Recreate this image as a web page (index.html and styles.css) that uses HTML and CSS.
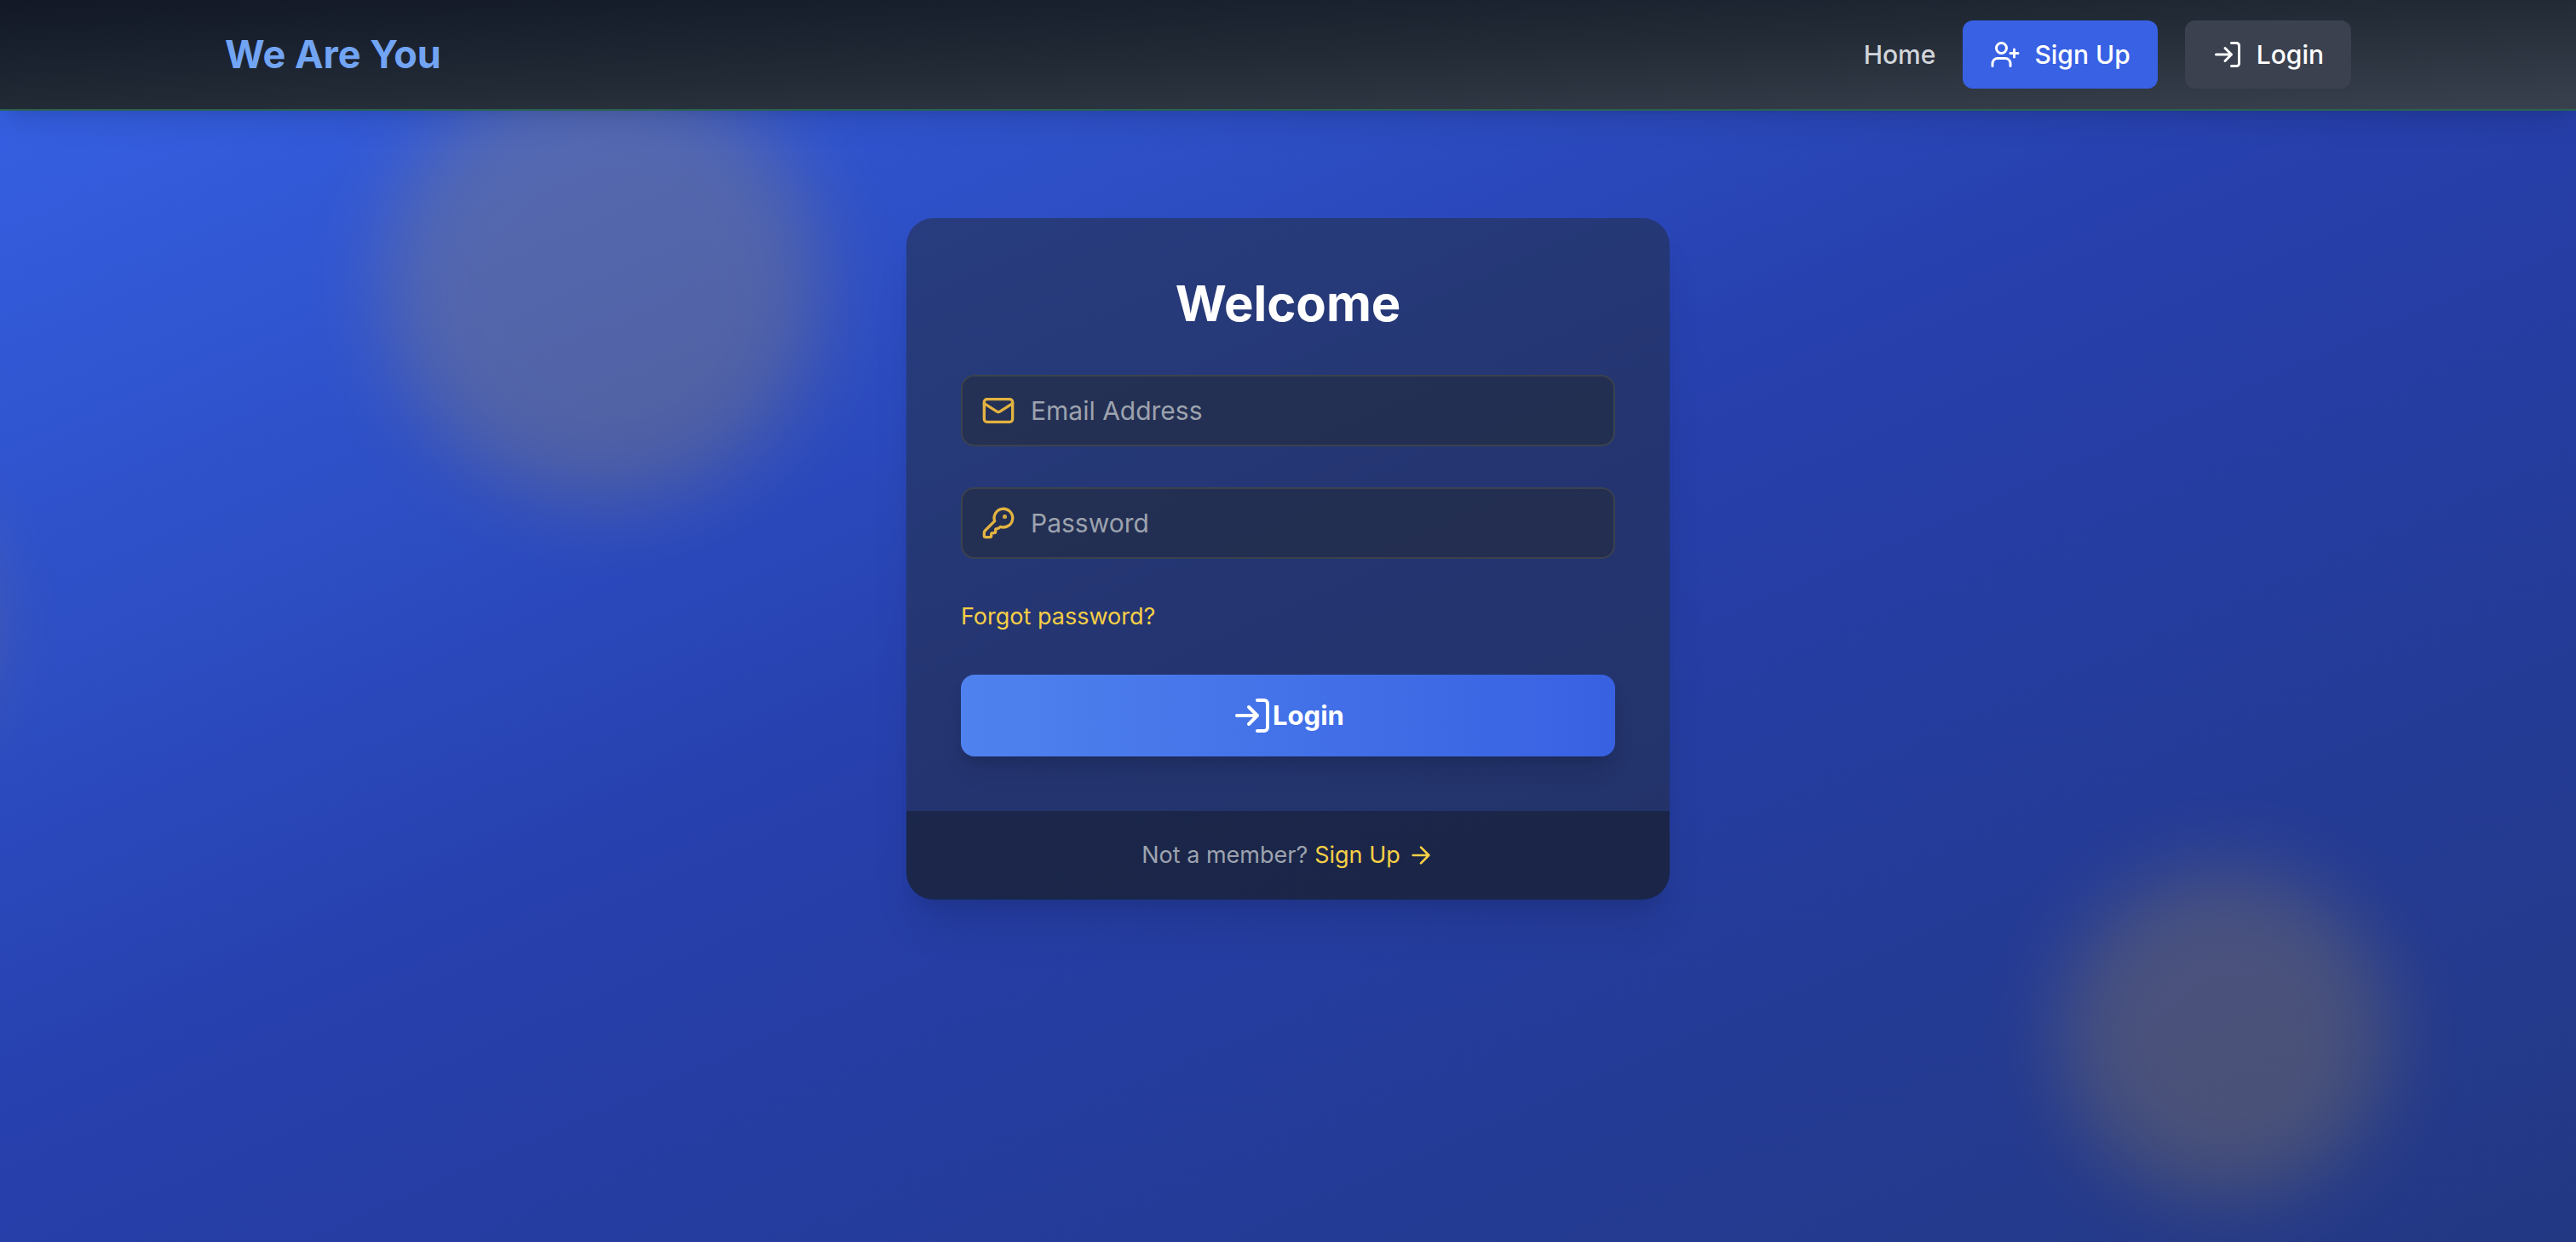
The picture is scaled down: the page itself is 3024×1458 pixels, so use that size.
FILE: index.html
```html
<!DOCTYPE html>
<html lang="en">
<head>
<meta charset="utf-8">
<meta name="viewport" content="width=device-width, initial-scale=1">
<title>We Are You</title>
<link rel="stylesheet" href="styles.css">
</head>
<body>
<header class="header">
  <div class="header-inner">
    <a class="logo" href="#">We Are You</a>
    <nav class="nav">
      <a class="nav-link" href="#">Home</a>
      <a class="nav-button nav-button-primary" href="#">
        <svg class="icon icon-sm" viewBox="0 0 24 24" aria-hidden="true"><path d="M16 21v-2a4 4 0 0 0-4-4H6a4 4 0 0 0-4 4v2"/><circle cx="9" cy="7" r="4"/><path d="M19 8v6M22 11h-6"/></svg>
        Sign Up
      </a>
      <a class="nav-button" href="#">
        <svg class="icon icon-sm" viewBox="0 0 24 24" aria-hidden="true"><path d="M15 3h4a2 2 0 0 1 2 2v14a2 2 0 0 1-2 2h-4"/><path d="m10 17 5-5-5-5M15 12H3"/></svg>
        Login
      </a>
    </nav>
  </div>
</header>
<main class="main">
  <div class="blob blob-top"></div>
  <div class="blob blob-left"></div>
  <div class="blob blob-bottom"></div>
  <section class="card">
    <div class="card-body">
      <h1 class="title">Welcome</h1>
      <form class="form">
        <label class="field">
          <svg class="icon icon-md" viewBox="0 0 24 24" aria-hidden="true"><rect x="2" y="4" width="20" height="16" rx="2"/><path d="m22 7-8.970 5.700a1.940 1.940 0 0 1-2.060 0L2 7"/></svg>
          <input class="input" type="email" placeholder="Email Address" aria-label="Email Address">
        </label>
        <label class="field">
          <svg class="icon icon-md" viewBox="0 0 24 24" aria-hidden="true"><path d="M2.586 17.414A2 2 0 0 0 2 18.828V21a1 1 0 0 0 1 1h3a1 1 0 0 0 1-1v-1a1 1 0 0 1 1-1h1a1 1 0 0 0 1-1v-1a1 1 0 0 1 1-1h.172a2 2 0 0 0 1.414-.586l.814-.814a6.5 6.5 0 1 0-4-4z"/><circle cx="16.5" cy="7.5" r=".5" fill="currentColor"/></svg>
          <input class="input" type="password" placeholder="Password" aria-label="Password">
        </label>
        <a class="link forgot" href="#">Forgot password?</a>
        <button class="submit" type="submit">
          <svg class="icon icon-lg" viewBox="0 0 24 24" aria-hidden="true"><path d="M15 3h4a2 2 0 0 1 2 2v14a2 2 0 0 1-2 2h-4"/><path d="m10 17 5-5-5-5M15 12H3"/></svg>
          Login
        </button>
      </form>
    </div>
    <div class="card-footer">
      <span>Not a member?</span>
      <a class="link signup" href="#">Sign Up
        <svg class="icon icon-xs" viewBox="0 0 24 24" aria-hidden="true"><path d="M5 12h14M12 5l7 7-7 7"/></svg>
      </a>
    </div>
  </section>
</main>
</body>
</html>
```
FILE: styles.css
```css
*,
*::before,
*::after {
  box-sizing: border-box;
}

body {
  margin: 0;
  min-height: 100vh;
  display: flex;
  flex-direction: column;
  font-family: Inter, "Liberation Sans", sans-serif;
  font-size: 30px;
  line-height: 48px;
  color: #fff;
  background: #243b8f;
}

a {
  color: inherit;
  text-decoration: none;
}

.icon {
  flex: none;
  fill: none;
  stroke: currentColor;
  stroke-width: 2;
  stroke-linecap: round;
  stroke-linejoin: round;
}

.icon-xs { width: 32px; height: 32px; }
.icon-sm { width: 36px; height: 36px; }
.icon-md { width: 40px; height: 40px; }
.icon-lg { width: 48px; height: 48px; }

.header {
  position: relative;
  z-index: 1;
  background: linear-gradient(to bottom right, #121826, #222a36, #3a414e);
  border-bottom: 2px solid #2a634f;
  box-shadow: 0 20px 30px -6px rgba(0, 0, 0, .1), 0 8px 12px -8px rgba(0, 0, 0, .1);
}

.header-inner {
  max-width: 2560px;
  margin: 0 auto;
  padding: 24px 32px;
  display: flex;
  align-items: center;
  justify-content: space-between;
}

.logo {
  font-size: 45px;
  font-weight: 700;
  color: #72a4f4;
}

.nav {
  display: flex;
  align-items: center;
  gap: 32px;
  font-weight: 500;
}

.nav-link {
  color: #d2d5da;
}

.nav-button {
  display: flex;
  align-items: center;
  gap: 16px;
  padding: 16px 32px;
  border-radius: 12px;
  background: #3b414f;
}

.nav-button-primary {
  background: #3861e4;
}

.main {
  position: relative;
  flex: 1;
  overflow: hidden;
  padding: 126px 32px;
  background: linear-gradient(to bottom right, #355fe1, #263fab 47%, #233883);
}

.blob {
  position: absolute;
  border-radius: 50%;
  background: #e2b22c;
  opacity: .2;
  filter: blur(48px);
}

.blob-top {
  width: 512px;
  height: 512px;
  left: 452px;
  top: -54px;
}

.blob-left {
  width: 384px;
  height: 384px;
  left: -404px;
  top: 408px;
}

.blob-bottom {
  width: 384px;
  height: 384px;
  right: 220px;
  bottom: 52px;
}

.card {
  position: relative;
  max-width: 896px;
  margin: 0 auto;
  border-radius: 32px;
  overflow: hidden;
  background: rgba(34, 42, 54, .5);
  box-shadow: 0 40px 50px -10px rgba(0, 0, 0, .1), 0 16px 20px -12px rgba(0, 0, 0, .1);
}

.card-body {
  padding: 64px;
}

.title {
  margin: 0 0 48px;
  font-size: 58px;
  line-height: 72px;
  font-weight: 700;
  text-align: center;
}

.form {
  display: flex;
  flex-direction: column;
  gap: 48px;
}

.field {
  display: flex;
  align-items: center;
  gap: 18px;
  height: 84px;
  padding: 0 22px;
  border: 2px solid #3b424e;
  border-radius: 16px;
  background: rgba(34, 42, 54, .55);
  color: #e3b341;
}

.input {
  flex: 1;
  min-width: 0;
  padding: 0;
  border: 0;
  outline: 0;
  background: none;
  font: inherit;
  color: #fff;
}

.input::placeholder {
  color: #9da3ae;
  opacity: 1;
}

.link {
  color: #f7cf46;
}

.forgot {
  align-self: flex-start;
  font-size: 27px;
  line-height: 40px;
}

.submit {
  display: flex;
  align-items: center;
  justify-content: center;
  height: 96px;
  padding: 0;
  border: 0;
  border-radius: 16px;
  font: inherit;
  font-size: 31px;
  font-weight: 700;
  color: #fff;
  background: linear-gradient(to right, #4f82ee, #3861e2);
  box-shadow: 0 20px 30px -6px rgba(0, 0, 0, .1), 0 8px 12px -4px rgba(0, 0, 0, .1);
}

.card-footer {
  display: flex;
  align-items: center;
  justify-content: center;
  gap: 8px;
  padding: 32px;
  font-size: 27px;
  line-height: 40px;
  color: #9da3ae;
  background: rgba(18, 24, 38, .5);
}

.signup {
  display: flex;
  align-items: center;
  gap: 8px;
}
```
